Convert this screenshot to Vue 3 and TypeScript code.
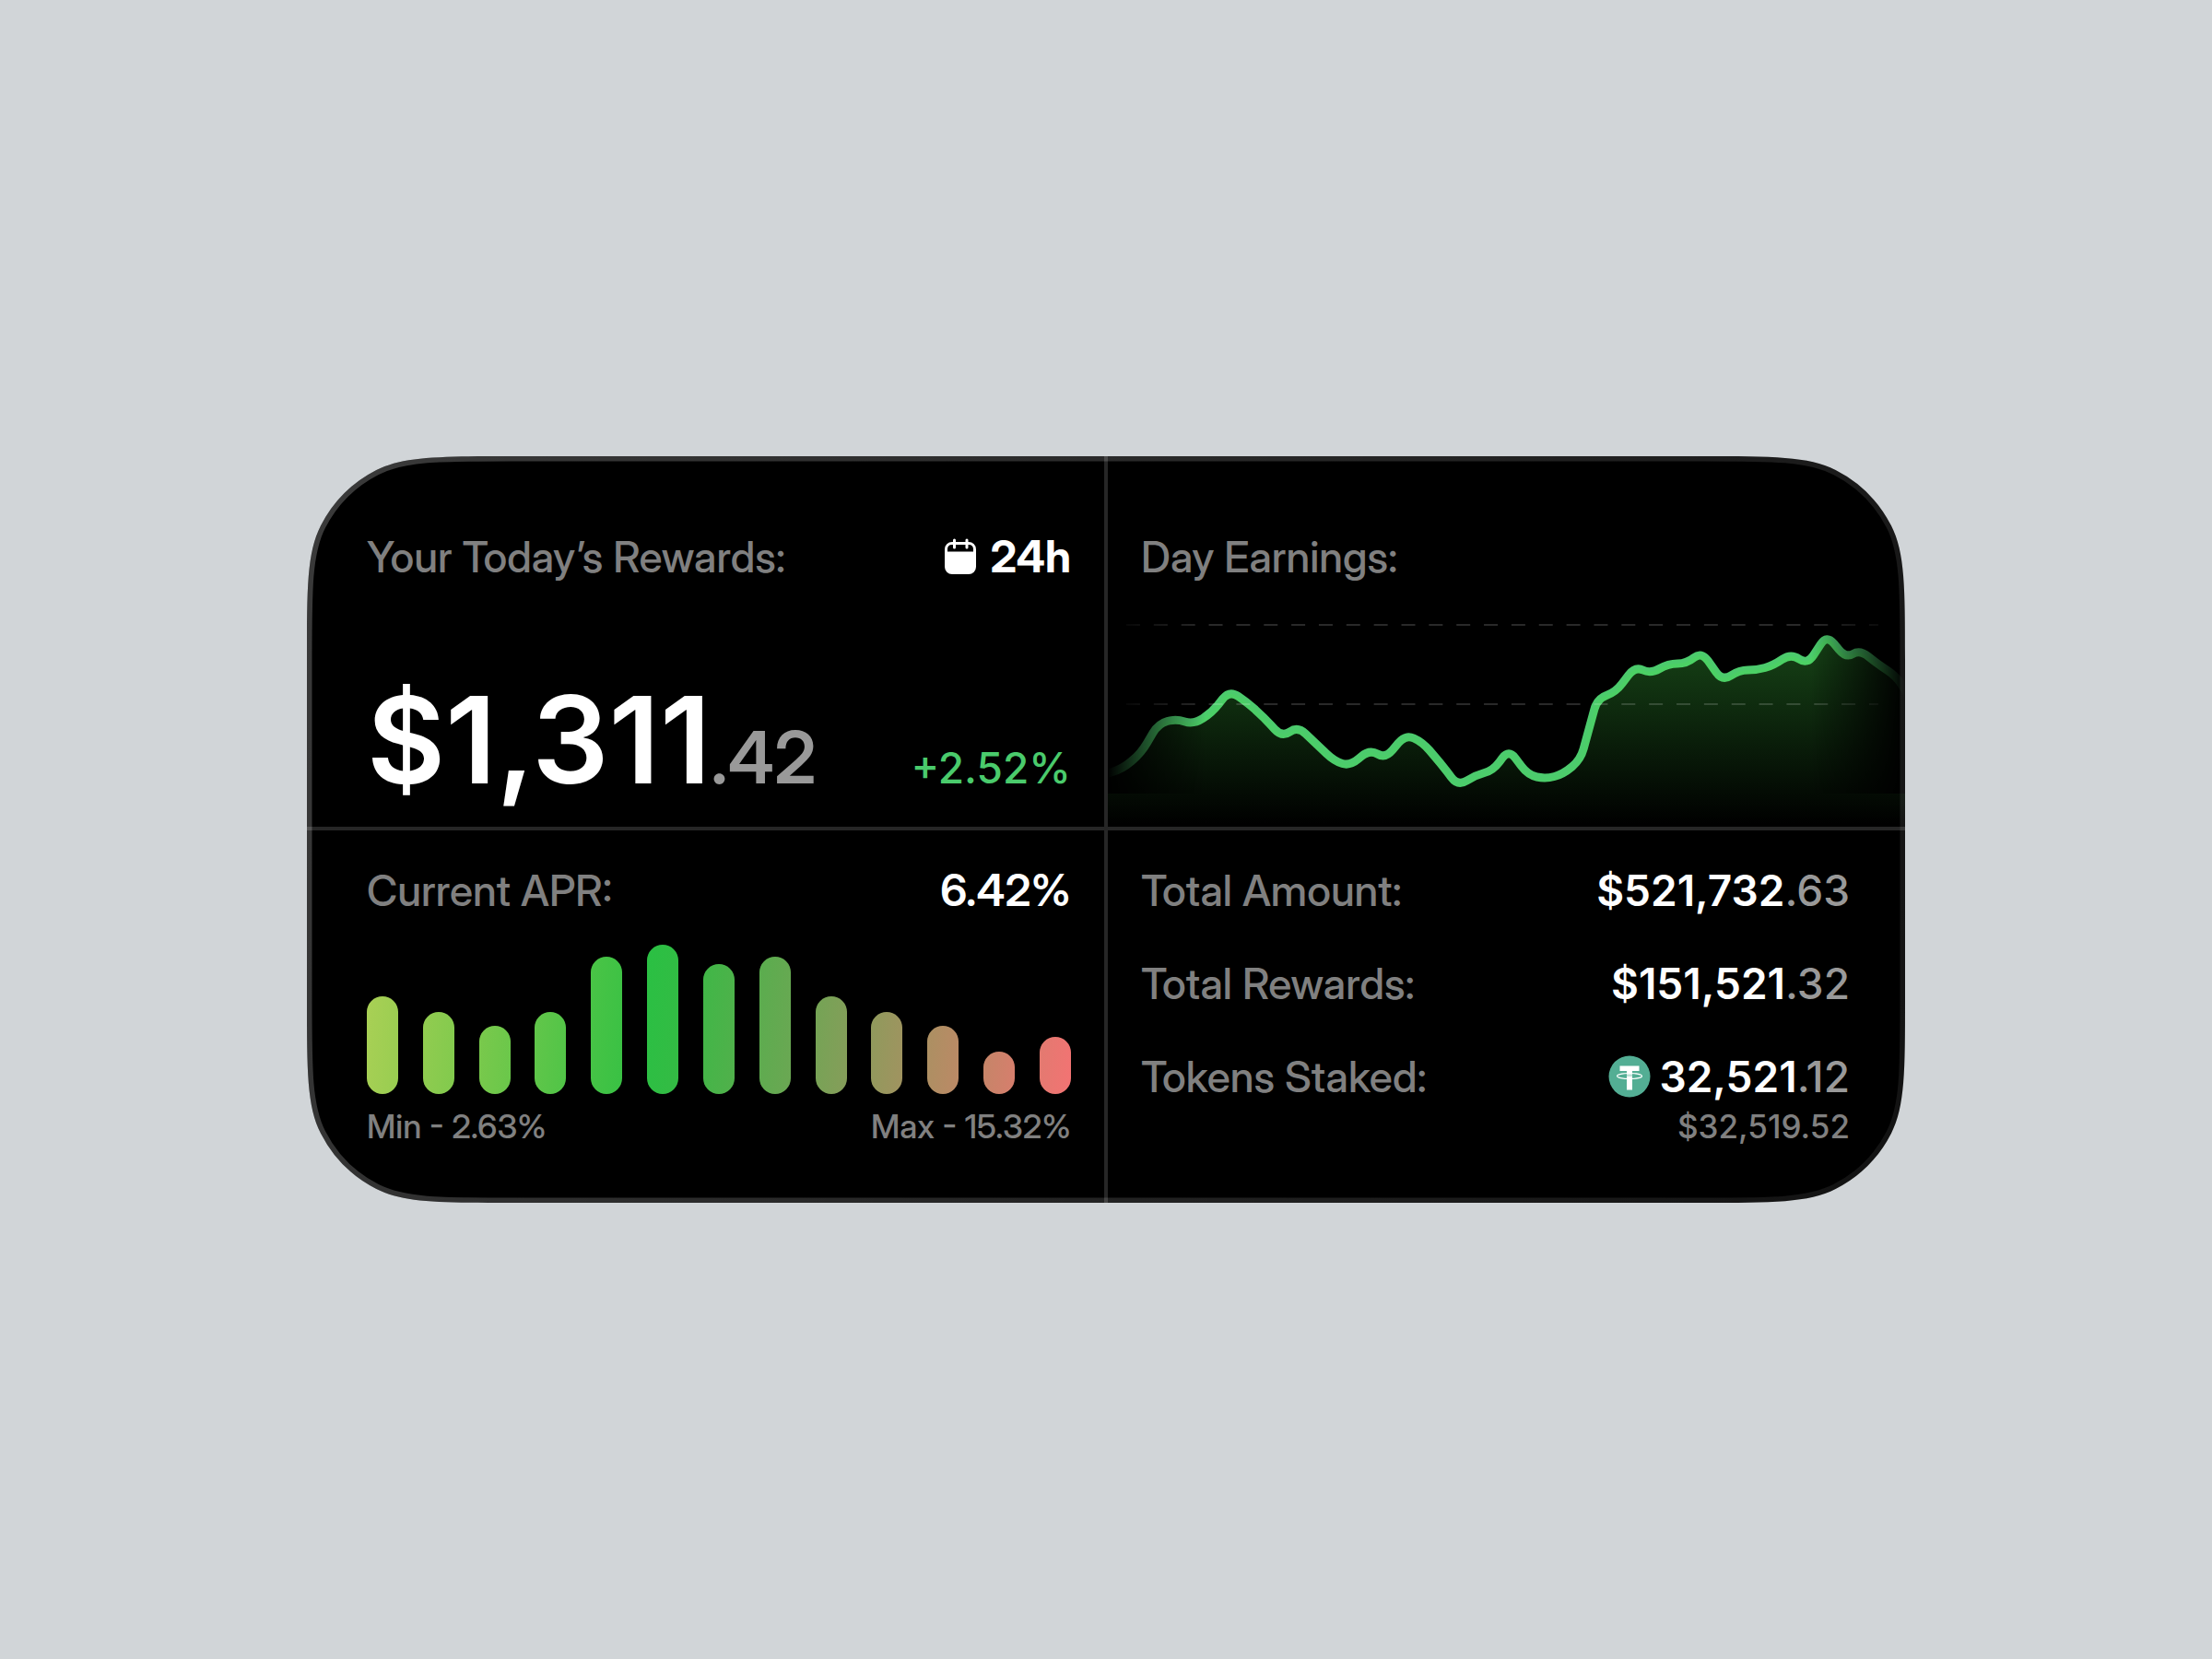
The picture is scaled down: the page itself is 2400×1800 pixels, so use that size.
<script setup lang="ts">
import { computed, onBeforeUnmount, onMounted, ref } from 'vue'

interface Point {
  x: number
  y: number
}

interface Bar {
  height: number
  from: string
  to: string
}

const CORNER_RADIUS = 138
const CHART_WIDTH = 865
const CHART_HEIGHT = 265

const card = ref<HTMLElement | null>(null)
const cardSize = ref({ width: 1734, height: 810 })
let observer: ResizeObserver | undefined

onMounted(() => {
  observer = new ResizeObserver(() => {
    if (card.value) {
      cardSize.value = { width: card.value.offsetWidth, height: card.value.offsetHeight }
    }
  })
  if (card.value) observer.observe(card.value)
})

onBeforeUnmount(() => observer?.disconnect())

/* Rounded rectangle whose corners ease into the straight sides. */
function smoothRect(w: number, h: number, r: number): string {
  const p = 1.6 * r
  const arc = 0.437 * r
  const c = 0.2139 * r
  const d = 0.109 * r
  const b = (p - arc - c - d) / 3
  const a = 2 * b
  return [
    `M${w - p} 0`,
    `c${a} 0 ${a + b} 0 ${a + b + c} ${d}`,
    `a${r} ${r} 0 0 1 ${arc} ${arc}`,
    `c${d} ${c} ${d} ${b + c} ${d} ${a + b + c}`,
    `V${h - p}`,
    `c0 ${a} 0 ${a + b} ${-d} ${a + b + c}`,
    `a${r} ${r} 0 0 1 ${-arc} ${arc}`,
    `c${-c} ${d} ${-(b + c)} ${d} ${-(a + b + c)} ${d}`,
    `H${p}`,
    `c${-a} 0 ${-(a + b)} 0 ${-(a + b + c)} ${-d}`,
    `a${r} ${r} 0 0 1 ${-arc} ${-arc}`,
    `c${-d} ${-c} ${-d} ${-(b + c)} ${-d} ${-(a + b + c)}`,
    `V${p}`,
    `c0 ${-a} 0 ${-(a + b)} ${d} ${-(a + b + c)}`,
    `a${r} ${r} 0 0 1 ${arc} ${-arc}`,
    `c${c} ${-d} ${b + c} ${-d} ${a + b + c} ${-d}`,
    'Z',
  ].join(' ')
}

const outline = computed(() => smoothRect(cardSize.value.width, cardSize.value.height, CORNER_RADIUS))

const earnings: [number, number][] = [
  [-6, 209], [16, 202], [36, 185], [55, 153], [74, 148], [93, 154], [113, 141], [132, 117],
  [151, 130], [169, 146], [189, 168], [206, 156], [226, 175], [246, 194], [263, 199],
  [284, 181], [301, 191], [323, 165], [341, 173], [361, 196], [380, 221], [399, 209],
  [418, 204], [435, 181], [456, 209], [475, 213], [494, 208], [513, 192], [531, 126],
  [551, 119], [572, 91], [589, 99], [608, 88], [628, 88], [644, 75], [667, 107],
  [685, 95], [704, 95], [722, 90], [741, 77], [759, 89], [780, 57], [801, 82],
  [816, 73], [836, 89], [856, 102], [868, 122],
]

/* Polyline with every vertex softened by a short curve. */
function softLine(source: [number, number][], radius: number): string {
  const pts: Point[] = source.map(([x, y]) => ({ x, y }))
  const toward = (from: Point, to: Point): Point => {
    const length = Math.hypot(to.x - from.x, to.y - from.y)
    const t = Math.min(radius / length, 0.5)
    return { x: from.x + (to.x - from.x) * t, y: from.y + (to.y - from.y) * t }
  }
  let d = `M${pts[0].x} ${pts[0].y}`
  for (let i = 1; i < pts.length - 1; i++) {
    const before = toward(pts[i], pts[i - 1])
    const after = toward(pts[i], pts[i + 1])
    d += ` L${before.x} ${before.y} Q${pts[i].x} ${pts[i].y} ${after.x} ${after.y}`
  }
  const last = pts[pts.length - 1]
  return `${d} L${last.x} ${last.y}`
}

const linePath = softLine(earnings, 12)
const areaPath = `${linePath} V${CHART_HEIGHT} H-6 Z`

const bars: Bar[] = [
  { height: 106, from: '#a9d055', to: '#98cd51' },
  { height: 89, from: '#92cc50', to: '#81ca4d' },
  { height: 74, from: '#7ac94c', to: '#69c74a' },
  { height: 89, from: '#62c64a', to: '#50c447' },
  { height: 149, from: '#4ac446', to: '#39c144' },
  { height: 162, from: '#2ac043', to: '#34bb44' },
  { height: 141, from: '#40b747', to: '#51b04b' },
  { height: 149, from: '#5aad4e', to: '#6ba753' },
  { height: 106, from: '#74a455', to: '#869d5a' },
  { height: 89, from: '#8f9a5c', to: '#a19360' },
  { height: 74, from: '#ab9062', to: '#bc8966' },
  { height: 46, from: '#c58568', to: '#d77e6d' },
  { height: 62, from: '#e27a70', to: '#f37373' },
]

const totals = [
  { label: 'Total Amount:', whole: '$521,732', cents: '.63' },
  { label: 'Total Rewards:', whole: '$151,521', cents: '.32' },
]
</script>

<template>
  <main class="page">
    <section ref="card" class="card">
      <svg class="backdrop" aria-hidden="true">
        <path :d="outline" fill="#000" />
      </svg>

      <div class="cell rewards">
        <header class="row">
          <h2 class="label">Your Today’s Rewards:</h2>
          <button type="button" class="period">
            <svg class="calendar" viewBox="0 0 36 40" aria-hidden="true">
              <path
                fill="#fff"
                fill-rule="evenodd"
                d="M9 4h18a8 8 0 0 1 8 8v19a8 8 0 0 1-8 8H9a8 8 0 0 1-8-8v-19a8 8 0 0 1 8-8zM8.500 7a4.500 4.500 0 0 0-4.500 4.500v3h28v-3a4.500 4.500 0 0 0-4.500-4.500z"
              />
              <path d="M11.500 2v8M25 2v8" stroke="#fff" stroke-width="3" stroke-linecap="round" />
            </svg>
            24h
          </button>
        </header>
        <div class="row amount-row">
          <p class="amount">$1,311<span class="amount-cents">.42</span></p>
          <p class="change">+2.52%</p>
        </div>
      </div>

      <div class="cell earnings">
        <h2 class="label earnings-title">Day Earnings:</h2>
        <svg
          class="chart"
          :viewBox="`0 0 ${CHART_WIDTH} ${CHART_HEIGHT}`"
          preserveAspectRatio="none"
          role="img"
          aria-label="Day earnings chart"
        >
          <defs>
            <linearGradient id="area-fill" gradientUnits="userSpaceOnUse" x1="0" y1="56" x2="0" y2="262">
              <stop offset="0" stop-color="#4be04b" stop-opacity="0.31" />
              <stop offset="1" stop-color="#4be04b" stop-opacity="0" />
            </linearGradient>
            <linearGradient id="fade-left">
              <stop offset="0" stop-color="#000" />
              <stop offset="1" stop-color="#000" stop-opacity="0" />
            </linearGradient>
            <linearGradient id="fade-right">
              <stop offset="0" stop-color="#000" stop-opacity="0" />
              <stop offset="1" stop-color="#000" />
            </linearGradient>
            <mask id="edge-fade" maskUnits="userSpaceOnUse" x="0" y="0" width="865" height="265">
              <rect width="865" height="265" fill="#fff" />
              <rect width="106" height="229" fill="url(#fade-left)" />
              <rect x="763" width="102" height="229" fill="url(#fade-right)" />
            </mask>
          </defs>
          <g mask="url(#edge-fade)">
            <path :d="linePath" fill="none" stroke="#4ccb6d" stroke-width="9" stroke-linejoin="round" />
            <path :d="areaPath" fill="url(#area-fill)" />
            <path
              d="M20 46H836M20 132H836"
              stroke="#fff"
              stroke-opacity="0.16"
              stroke-width="2"
              stroke-dasharray="15 14.850"
            />
          </g>
        </svg>
      </div>

      <div class="cell apr">
        <header class="row">
          <h2 class="label">Current APR:</h2>
          <p class="value">6.42%</p>
        </header>
        <div class="bars" role="img" aria-label="APR history">
          <span
            v-for="(bar, index) in bars"
            :key="index"
            class="bar"
            :style="{
              height: `${bar.height}px`,
              background: `linear-gradient(97deg, ${bar.from}, ${bar.to})`,
            }"
          />
        </div>
        <footer class="row range">
          <span>Min - 2.63%</span>
          <span>Max - 15.32%</span>
        </footer>
      </div>

      <dl class="cell totals">
        <div v-for="item in totals" :key="item.label" class="row">
          <dt class="label">{{ item.label }}</dt>
          <dd class="value money">{{ item.whole }}<span class="cents">{{ item.cents }}</span></dd>
        </div>
        <div class="row">
          <dt class="label">Tokens Staked:</dt>
          <dd class="staked">
            <span class="value money token">
              <svg class="tether" viewBox="0 0 46 46" aria-hidden="true">
                <circle cx="23" cy="23" r="22.500" fill="#53ae94" />
                <path d="M12.500 11.500h21v5.500H26v20.500h-6V17h-7.500z" fill="#fff" />
                <path d="M20 20.500h6v2.500h-6z" fill="#53ae94" opacity="0.350" />
                <ellipse cx="23" cy="22.500" rx="13.500" ry="3" fill="none" stroke="#fff" stroke-width="1.100" />
              </svg>
              <span>32,521<span class="cents">.12</span></span>
            </span>
            <span class="range fiat">$32,519.52</span>
          </dd>
        </div>
      </dl>

      <svg class="frame" aria-hidden="true">
        <defs>
          <clipPath id="card-shape">
            <path :d="outline" />
          </clipPath>
          <linearGradient
            id="frame-stroke"
            gradientUnits="userSpaceOnUse"
            x1="0"
            y1="0"
            :x2="cardSize.width"
            :y2="cardSize.height"
          >
            <stop offset="0" stop-color="#fff" stop-opacity="0.230" />
            <stop offset="1" stop-color="#fff" stop-opacity="0.070" />
          </linearGradient>
        </defs>
        <path
          :d="outline"
          fill="none"
          stroke="url(#frame-stroke)"
          stroke-width="11"
          clip-path="url(#card-shape)"
        />
      </svg>
    </section>
  </main>
</template>

<style>
body {
  margin: 0;
  background: #d1d5d8;
}
</style>

<style scoped>
.page {
  display: grid;
  place-items: center;
  min-height: 100vh;
  font-family: "Inter Display", Inter, "Liberation Sans", sans-serif;
  font-size: 48px;
  line-height: 56px;
  font-weight: 500;
  color: #fff;
}

.card {
  position: relative;
  display: grid;
  grid-template-columns: 1fr 4px 1fr;
  grid-template-rows: auto 4px auto;
  width: 72.25%;
}

.card::before,
.card::after {
  content: "";
  z-index: 1;
  background: #262626;
}

.card::before {
  grid-area: 1 / 2 / 4 / 3;
}

.card::after {
  grid-area: 2 / 1 / 3 / 4;
}

.backdrop,
.frame {
  position: absolute;
  inset: 0;
  width: 100%;
  height: 100%;
}

.frame {
  z-index: 2;
  pointer-events: none;
}

.cell {
  position: relative;
  display: flex;
  flex-direction: column;
  min-width: 0;
  margin: 0;
}

.rewards {
  grid-area: 1 / 1;
  gap: 103px;
  padding: 81px 36px 26px 65px;
}

.earnings {
  grid-area: 1 / 3;
  padding-top: 81px;
}

.earnings-title {
  padding: 0 36px;
}

.apr {
  grid-area: 3 / 1;
  padding: 37px 36px 63px 65px;
}

.totals {
  grid-area: 3 / 3;
  gap: 45px;
  padding: 37px 60px 63px 36px;
}

.row {
  display: flex;
  justify-content: space-between;
}

h2,
p,
dd {
  margin: 0;
}

.label {
  font-size: 46px;
  font-weight: 500;
  color: #808080;
}

.period {
  display: flex;
  align-items: center;
  gap: 14px;
  padding: 0;
  border: 0;
  background: none;
  color: inherit;
  font: inherit;
  font-weight: 700;
}

.calendar {
  width: 36px;
  height: 40px;
}

.amount-row {
  align-items: baseline;
}

.amount {
  font-family: Inter, "Liberation Sans", sans-serif;
  font-size: 131px;
  line-height: 136px;
  font-weight: 600;
}

.amount-cents {
  font-family: "Inter Display", Inter, "Liberation Sans", sans-serif;
  font-size: 78px;
  line-height: 78px;
  font-weight: 600;
  color: #999;
}

.change {
  font-family: Inter, "Liberation Sans", sans-serif;
  font-size: 46px;
  color: #4acb6c;
}

.value {
  font-weight: 600;
}

.money {
  font-family: Inter, "Liberation Sans", sans-serif;
  font-size: 46px;
}

.cents {
  font-weight: 500;
  color: #999;
}

.chart {
  display: block;
  width: 100%;
  height: 265px;
}

.bars {
  display: flex;
  align-items: flex-end;
  justify-content: space-between;
  height: 162px;
  margin: 31px 0 15px;
}

.bar {
  width: 34px;
  border-radius: 17px;
}

.range {
  font-size: 36px;
  line-height: 40px;
  font-weight: 500;
  color: #808080;
}

.fiat {
  font-family: Inter, "Liberation Sans", sans-serif;
  font-size: 35px;
}

.staked {
  display: flex;
  flex-direction: column;
  align-items: flex-end;
  gap: 6px;
}

.token {
  display: flex;
  align-items: center;
  gap: 9px;
}

.tether {
  width: 46px;
  height: 46px;
}
</style>
